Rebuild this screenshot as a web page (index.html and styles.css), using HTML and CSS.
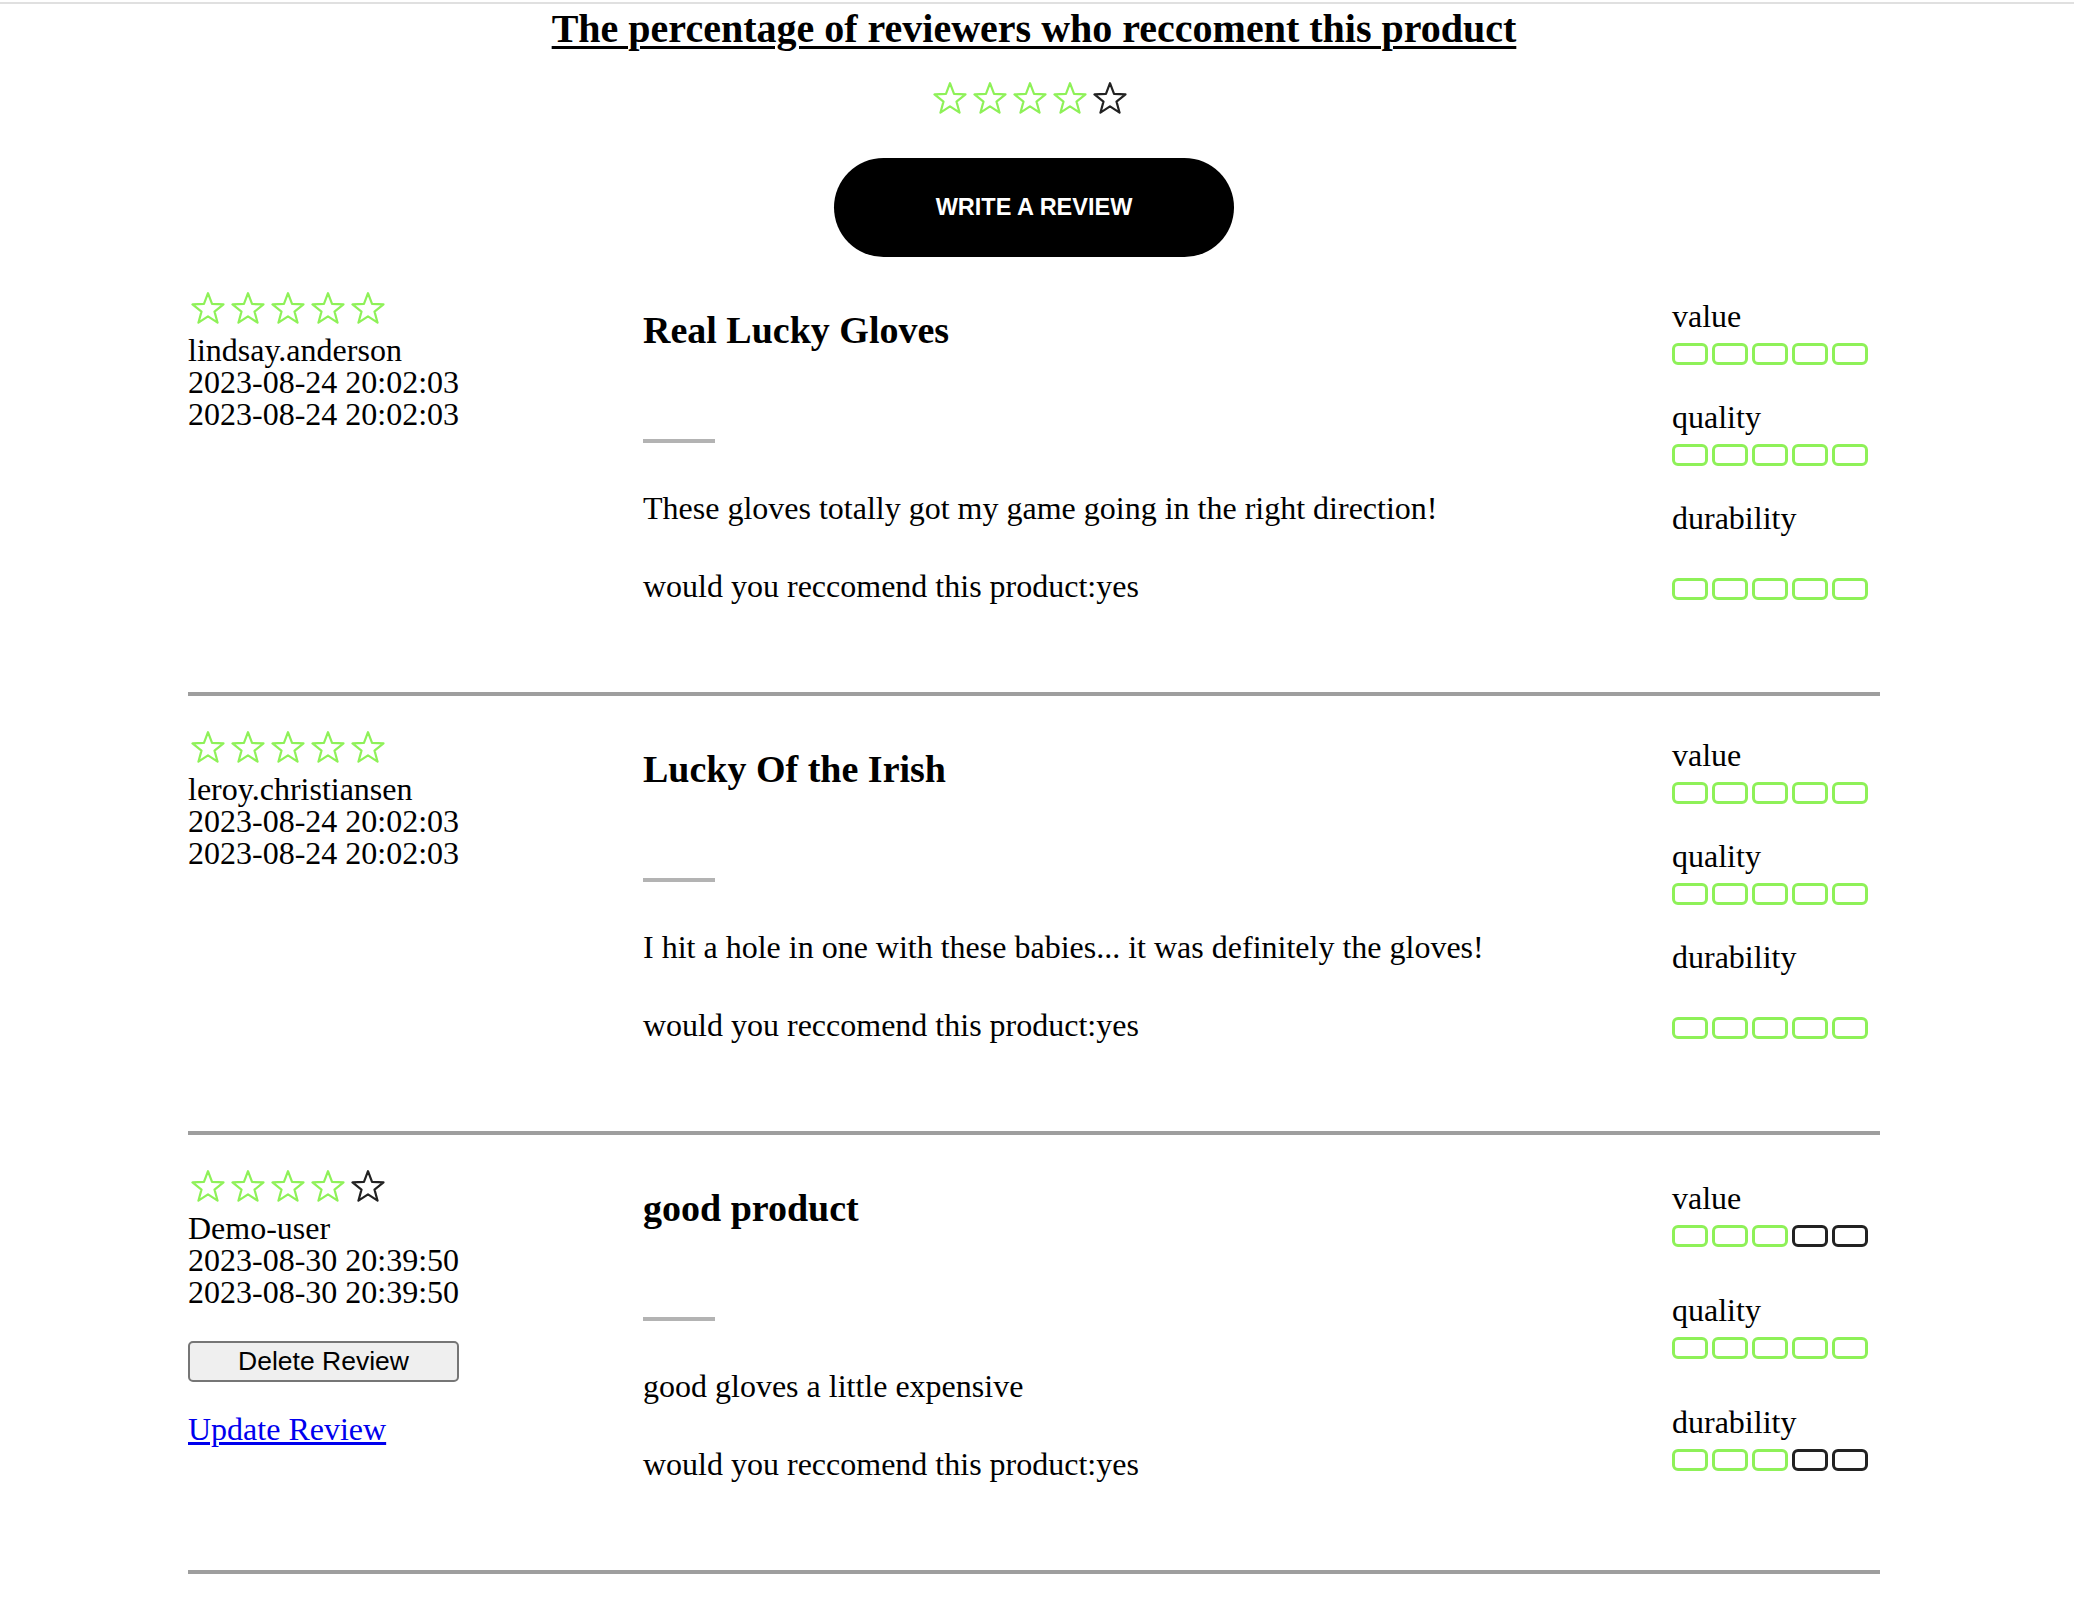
FILE: index.html
```html
<!DOCTYPE html>
<html lang="en">
<head>
<meta charset="utf-8">
<title>Reviews</title>
<link rel="stylesheet" href="styles.css">
</head>
<body>
<svg class="sprite" aria-hidden="true">
  <symbol id="star" viewBox="0 0 40 32">
    <polygon points="20,1.2 24.03,11.96 35.5,12.46 26.52,19.62 29.58,30.69 20,24.35 10.42,30.69 13.48,19.62 4.5,12.46 15.97,11.96" fill="none" stroke="currentColor" stroke-width="2.2" stroke-linejoin="round"/>
  </symbol>
</svg>

<div class="topline"></div>

<h1 class="page-title">The percentage of reviewers who reccoment this product</h1>

<div class="stars stars--summary">
  <svg class="star star--on"><use href="#star"/></svg>
  <svg class="star star--on"><use href="#star"/></svg>
  <svg class="star star--on"><use href="#star"/></svg>
  <svg class="star star--on"><use href="#star"/></svg>
  <svg class="star star--off"><use href="#star"/></svg>
</div>

<div class="cta-wrap">
  <button class="cta" type="button">WRITE A REVIEW</button>
</div>

<main class="reviews">

  <section class="review">
    <div class="review-meta">
      <div class="meta">
        <div class="stars">
          <svg class="star star--on"><use href="#star"/></svg>
          <svg class="star star--on"><use href="#star"/></svg>
          <svg class="star star--on"><use href="#star"/></svg>
          <svg class="star star--on"><use href="#star"/></svg>
          <svg class="star star--on"><use href="#star"/></svg>
        </div>
        <div class="author">lindsay.anderson</div>
        <div class="date">2023-08-24 20:02:03</div>
        <div class="date">2023-08-24 20:02:03</div>
      </div>
    </div>
    <div class="review-body">
      <h3 class="review-title">Real Lucky Gloves</h3>
      <div class="accent"></div>
      <p class="review-text">These gloves totally got my game going in the right direction!</p>
      <p class="recommend">would you reccomend this product:yes</p>
    </div>
    <div class="ratings">
      <div class="rating">
        <div class="rating-label">value</div>
        <div class="bars"><span class="bar on"></span><span class="bar on"></span><span class="bar on"></span><span class="bar on"></span><span class="bar on"></span></div>
      </div>
      <div class="rating">
        <div class="rating-label">quality</div>
        <div class="bars"><span class="bar on"></span><span class="bar on"></span><span class="bar on"></span><span class="bar on"></span><span class="bar on"></span></div>
      </div>
      <div class="rating rating--detached">
        <div class="rating-label">durability</div>
        <div class="bars"><span class="bar on"></span><span class="bar on"></span><span class="bar on"></span><span class="bar on"></span><span class="bar on"></span></div>
      </div>
    </div>
  </section>
  <hr class="divider">

  <section class="review">
    <div class="review-meta">
      <div class="meta">
        <div class="stars">
          <svg class="star star--on"><use href="#star"/></svg>
          <svg class="star star--on"><use href="#star"/></svg>
          <svg class="star star--on"><use href="#star"/></svg>
          <svg class="star star--on"><use href="#star"/></svg>
          <svg class="star star--on"><use href="#star"/></svg>
        </div>
        <div class="author">leroy.christiansen</div>
        <div class="date">2023-08-24 20:02:03</div>
        <div class="date">2023-08-24 20:02:03</div>
      </div>
    </div>
    <div class="review-body">
      <h3 class="review-title">Lucky Of the Irish</h3>
      <div class="accent"></div>
      <p class="review-text">I hit a hole in one with these babies... it was definitely the gloves!</p>
      <p class="recommend">would you reccomend this product:yes</p>
    </div>
    <div class="ratings">
      <div class="rating">
        <div class="rating-label">value</div>
        <div class="bars"><span class="bar on"></span><span class="bar on"></span><span class="bar on"></span><span class="bar on"></span><span class="bar on"></span></div>
      </div>
      <div class="rating">
        <div class="rating-label">quality</div>
        <div class="bars"><span class="bar on"></span><span class="bar on"></span><span class="bar on"></span><span class="bar on"></span><span class="bar on"></span></div>
      </div>
      <div class="rating rating--detached">
        <div class="rating-label">durability</div>
        <div class="bars"><span class="bar on"></span><span class="bar on"></span><span class="bar on"></span><span class="bar on"></span><span class="bar on"></span></div>
      </div>
    </div>
  </section>
  <hr class="divider">

  <section class="review">
    <div class="review-meta">
      <div class="meta">
        <div class="stars">
          <svg class="star star--on"><use href="#star"/></svg>
          <svg class="star star--on"><use href="#star"/></svg>
          <svg class="star star--on"><use href="#star"/></svg>
          <svg class="star star--on"><use href="#star"/></svg>
          <svg class="star star--off"><use href="#star"/></svg>
        </div>
        <div class="author">Demo-user</div>
        <div class="date">2023-08-30 20:39:50</div>
        <div class="date">2023-08-30 20:39:50</div>
        <button class="delete-btn" type="button">Delete Review</button>
        <a class="update-link" href="#">Update Review</a>
      </div>
    </div>
    <div class="review-body">
      <h3 class="review-title">good product</h3>
      <div class="accent"></div>
      <p class="review-text">good gloves a little expensive</p>
      <p class="recommend">would you reccomend this product:yes</p>
    </div>
    <div class="ratings ratings--spread">
      <div class="rating">
        <div class="rating-label">value</div>
        <div class="bars"><span class="bar on"></span><span class="bar on"></span><span class="bar on"></span><span class="bar off"></span><span class="bar off"></span></div>
      </div>
      <div class="rating">
        <div class="rating-label">quality</div>
        <div class="bars"><span class="bar on"></span><span class="bar on"></span><span class="bar on"></span><span class="bar on"></span><span class="bar on"></span></div>
      </div>
      <div class="rating">
        <div class="rating-label">durability</div>
        <div class="bars"><span class="bar on"></span><span class="bar on"></span><span class="bar on"></span><span class="bar off"></span><span class="bar off"></span></div>
      </div>
    </div>
  </section>
  <hr class="divider">

</main>
</body>
</html>
```

FILE: styles.css
```css
html, body {
  background: #fff;
}

body {
  margin: 0;
  padding-right: 6px;
  font-family: "Liberation Serif", "Times New Roman", serif;
  color: #000;
}

.sprite {
  position: absolute;
  width: 0;
  height: 0;
  overflow: hidden;
}

.topline {
  height: 2px;
  margin-top: 2px;
  margin-right: -6px;
  background: #e0e0e0;
}

.page-title {
  margin: 4.5px 0 0;
  font-size: 40px;
  line-height: 40px;
  font-weight: bold;
  text-align: center;
  text-decoration: underline;
  text-decoration-thickness: 3px;
  text-underline-offset: 4px;
}

.stars {
  display: flex;
  height: 32px;
}

.stars--summary {
  justify-content: center;
  margin-top: 33.5px;
  padding-right: 8px;
}

.star {
  display: block;
  width: 40px;
  height: 32px;
  flex: none;
}

.star--on {
  color: #8ef158;
}

.star--off {
  color: #222;
}

.cta-wrap {
  display: flex;
  justify-content: center;
  margin-top: 44px;
}

.cta {
  display: flex;
  align-items: center;
  justify-content: center;
  width: 400px;
  height: 99px;
  padding: 0;
  border: none;
  border-radius: 50px;
  background: #000;
  color: #fff;
  font-family: "Liberation Sans", Arial, sans-serif;
  font-weight: bold;
  font-size: 23.5px;
  cursor: pointer;
}

.reviews {
  width: 1692px;
  margin: 0 auto;
}

.review {
  display: grid;
  grid-template-columns: 455px 1029px 208px;
  padding-bottom: 90px;
}

.review-meta {
  padding-top: 35px;
}

.meta {
  display: flex;
  flex-direction: column;
  align-items: flex-start;
  width: max-content;
}

.author {
  margin-top: 10px;
  font-size: 32px;
  line-height: 32px;
}

.date {
  font-size: 32px;
  line-height: 32px;
}

.delete-btn {
  align-self: stretch;
  box-sizing: border-box;
  height: 41px;
  margin-top: 33px;
  padding: 0;
  border: 2px solid #767676;
  border-radius: 5px;
  background: #efefef;
  color: #000;
  font-family: "Liberation Sans", Arial, sans-serif;
  font-size: 26.5px;
  cursor: pointer;
}

.update-link {
  margin-top: 31px;
  font-size: 32px;
  line-height: 32px;
  color: #0000ee;
  text-decoration: underline;
}

.review-body {
  padding-top: 54px;
}

.review-title {
  margin: 0;
  font-size: 38px;
  line-height: 38px;
  font-weight: bold;
}

.accent {
  width: 72px;
  height: 4px;
  margin-top: 90px;
  background: #b3b3b3;
}

.review-text {
  margin: 49px 0 0;
  font-size: 32px;
  line-height: 32px;
}

.recommend {
  margin: 46px 0 0;
  font-size: 32px;
  line-height: 32px;
}

.ratings {
  padding-top: 43px;
}

.rating + .rating {
  margin-top: 36px;
}

.rating-label {
  font-size: 32px;
  line-height: 32px;
}

.bars {
  display: flex;
  gap: 4px;
  margin-top: 11px;
}

.rating--detached .bars {
  margin-top: 44px;
}

.ratings--spread {
  padding-top: 47px;
}

.ratings--spread .rating + .rating {
  margin-top: 47px;
}

.bar {
  display: block;
  box-sizing: border-box;
  width: 36px;
  height: 22px;
  border: 3px solid;
  border-radius: 6px;
}

.bar.on {
  border-color: #8ef158;
}

.bar.off {
  border-color: #222;
}

.divider {
  display: block;
  height: 4px;
  margin: 0;
  border: 0;
  background: #9e9e9e;
}
```
